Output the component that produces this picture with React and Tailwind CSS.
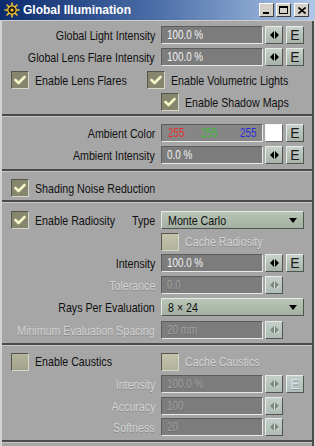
import React from "react";

const TXT = "text-[13px] leading-none text-[#111]";
const DIS = "text-[13px] leading-none text-[#d3d3d3] [text-shadow:0_1px_0_#8c8c8c]";

function N({ children, right, className = "" }) {
  return (
    <span
      className={
        "inline-block whitespace-nowrap scale-x-[0.82] " +
        (right ? "origin-right " : "origin-left ") +
        className
      }
    >
      {children}
    </span>
  );
}

function Arrows({ disabled }) {
  return (
    <svg width="9" height="8" viewBox="0 0 9 8">
      {disabled ? (
        <>
          <path d="M4 0 L0 4 L4 8Z M5 0 L9 4 L5 8Z" fill="#e6ebe6" transform="translate(0.6,0.6)" />
          <path d="M4 0 L0 4 L4 8Z M5 0 L9 4 L5 8Z" fill="#7f887f" />
        </>
      ) : (
        <path d="M4 0 L0 4 L4 8Z M5 0 L9 4 L5 8Z" fill="#000" />
      )}
    </svg>
  );
}

function Btn({ children, disabled, className = "" }) {
  return (
    <div
      className={
        "w-[18px] h-[18px] flex items-center justify-center border border-t-[#e6ede8] border-l-[#e6ede8] border-b-[#4f5750] border-r-[#4f5750] " +
        (disabled
          ? "bg-linear-to-b from-[#c4cfc9] to-[#afbdb6] "
          : "bg-linear-to-b from-[#c8d2ca] to-[#a7b3aa] ") +
        className
      }
    >
      {children}
    </div>
  );
}

function EBtn({ disabled }) {
  return (
    <Btn disabled={disabled}>
      <span
        className={
          "text-[14px] leading-none " +
          (disabled ? "text-[#d6e4ec] [text-shadow:0_1px_0_#8d9a9f]" : "text-[#1a1a1a]")
        }
      >
        E
      </span>
    </Btn>
  );
}

function Field({ children, disabled }) {
  return (
    <div
      className={
        "w-[102px] h-[18px] bg-[#7c7c7c] border border-t-[#5c5c5c] border-l-[#5c5c5c] border-b-[#e9e9e9] border-r-[#e9e9e9] flex items-center pl-[5px] text-[12px] leading-none " +
        (disabled ? "text-[#a2a2a2] [text-shadow:0_1px_0_#6a6a6a]" : "text-[#f3f3f3]")
      }
    >
      <N>{children}</N>
    </div>
  );
}

function Check({ checked, disabled }) {
  return (
    <div
      className={
        "w-[18px] h-[18px] shrink-0 border border-t-[#55564a] border-l-[#55564a] border-b-[#d7d7c8] border-r-[#d7d7c8] flex items-center justify-center " +
        (checked
          ? "bg-[#86866f]"
          : disabled
          ? "bg-linear-to-b from-[#c3c3ac] to-[#b2b29a]"
          : "bg-linear-to-b from-[#b4b49d] to-[#a3a38c]")
      }
    >
      {checked && (
        <svg width="12" height="10" viewBox="0 0 12 10">
          <path d="M1.5 5 L4.5 8 L10.5 2" fill="none" stroke="#f5f5c6" strokeWidth="2.6" strokeLinecap="round" strokeLinejoin="round" />
        </svg>
      )}
    </div>
  );
}

function Label({ children, disabled }) {
  return (
    <div className={"w-[153px] shrink-0 flex justify-end " + (disabled ? DIS : TXT)}>
      <N right className="shrink-0">{children}</N>
    </div>
  );
}

function NumRow({ label, value, e, disabled, eDisabled, className = "" }) {
  return (
    <div className={"flex items-center h-[18px] " + className}>
      <Label disabled={disabled}>{label}</Label>
      <div className="ml-[6px]">
        <Field disabled={disabled}>{value}</Field>
      </div>
      <div className="ml-[2px]">
        <Btn disabled={disabled}>
          <Arrows disabled={disabled} />
        </Btn>
      </div>
      {e && (
        <div className="ml-[3px]">
          <EBtn disabled={eDisabled} />
        </div>
      )}
    </div>
  );
}

function CheckItem({ checked, disabled, children }) {
  return (
    <div className="flex items-center">
      <Check checked={checked} disabled={disabled} />
      <span className={"ml-[6px] " + (disabled ? DIS : TXT)}>
        <N>{children}</N>
      </span>
    </div>
  );
}

function Dropdown({ children }) {
  return (
    <div className="w-[143px] h-[18px] flex items-center justify-between pl-[6px] pr-[6px] border border-t-[#e3ebe2] border-l-[#e3ebe2] border-b-[#4e574d] border-r-[#4e574d] bg-linear-to-b from-[#b9c5b7] to-[#a3afa1]">
      <span className="text-[13px] leading-none text-[#111]">
        <N>{children}</N>
      </span>
      <svg width="8" height="5" viewBox="0 0 8 5">
        <path d="M0 0 L8 0 L4 5Z" fill="#000" />
      </svg>
    </div>
  );
}

function Sep() {
  return (
    <div className="h-[3px] shrink-0 flex flex-col">
      <div className="h-[2px] bg-[#4b4b4b]" />
      <div className="h-[1px] bg-[#c6c6c6]" />
    </div>
  );
}

function TitleBtn({ children, className = "" }) {
  return (
    <div
      className={
        "w-[15px] h-[14px] bg-[#d4d0c8] border border-t-[#ffffff] border-l-[#ffffff] border-b-[#404040] border-r-[#404040] flex items-center justify-center " +
        className
      }
    >
      {children}
    </div>
  );
}

export default function App() {
  return (
    <div className="w-[315px] h-[446px] overflow-hidden flex flex-col bg-[#a6a6a6] font-['Liberation_Sans',sans-serif]">
      {/* Title bar */}
      <div className="h-[20px] shrink-0 flex items-center bg-linear-to-r from-[#0c2a6e] via-[#4d6fa8] to-[#b0c8e8]">
        <div className="ml-[4px] w-[16px] h-[16px]">
          <svg width="16" height="16" viewBox="0 0 16 16">
            <g stroke="#f2c230" strokeWidth="1.6" strokeLinecap="round">
              <line x1="8" y1="1" x2="8" y2="3.5" />
              <line x1="8" y1="12.5" x2="8" y2="15" />
              <line x1="1" y1="8" x2="3.5" y2="8" />
              <line x1="12.5" y1="8" x2="15" y2="8" />
              <line x1="3" y1="3" x2="4.8" y2="4.8" />
              <line x1="11.2" y1="11.2" x2="13" y2="13" />
              <line x1="3" y1="13" x2="4.8" y2="11.2" />
              <line x1="11.2" y1="4.8" x2="13" y2="3" />
            </g>
            <circle cx="8" cy="8" r="4.2" fill="#1a1a1a" stroke="#f2c230" strokeWidth="1.2" />
            <circle cx="8" cy="8" r="1.6" fill="#f2c230" />
          </svg>
        </div>
        <span className="ml-[3px] text-[12px] font-bold text-white leading-none">Global Illumination</span>
        <div className="ml-auto mr-[6px] flex items-center">
          <TitleBtn>
            <div className="w-[6px] h-[2px] bg-black mt-[6px] -ml-[2px]" />
          </TitleBtn>
          <TitleBtn className="ml-[2px]">
            <div className="w-[9px] h-[8px] border border-black border-t-2" />
          </TitleBtn>
          <TitleBtn className="ml-[3px]">
            <svg width="8" height="7" viewBox="0 0 8 7">
              <path d="M0.5 0.5 L7.5 6.5 M7.5 0.5 L0.5 6.5" stroke="#000" strokeWidth="1.6" />
            </svg>
          </TitleBtn>
        </div>
      </div>

      {/* Body */}
      <div className="flex-1 flex flex-col border-t border-t-[#cfcfcf] border-l-2 border-l-[#d2d2d2] border-r border-r-[#d6d6d6]">
        <div className="flex-1 flex flex-col border-r-2 border-r-[#4b4b4b]">
          {/* Section 1 */}
          <div className="flex flex-col pt-[5px] pb-[3px]">
            <NumRow label="Global Light Intensity" value="100.0 %" e />
            <NumRow label="Global Lens Flare Intensity" value="100.0 %" e className="mt-[4px]" />
            <div className="flex items-center h-[18px] mt-[5px]">
              <div className="w-[159px] pl-[9px]">
                <CheckItem checked>Enable Lens Flares</CheckItem>
              </div>
              <CheckItem checked>Enable Volumetric Lights</CheckItem>
            </div>
            <div className="flex items-center h-[18px] mt-[4px]">
              <div className="w-[159px]" />
              <CheckItem checked>Enable Shadow Maps</CheckItem>
            </div>
          </div>
          <Sep />

          {/* Section 2 */}
          <div className="flex flex-col pt-[7px] pb-[5px]">
            <div className="flex items-center h-[18px]">
              <Label>Ambient Color</Label>
              <div className="ml-[6px] w-[102px] h-[18px] bg-[#868686] border border-t-[#5c5c5c] border-l-[#5c5c5c] border-b-[#e9e9e9] border-r-[#e9e9e9] flex items-center text-[12px] leading-none">
                <N className="ml-[6px] text-[#e23434]">255</N>
                <N className="ml-[13px] text-[#3dbb3d]">255</N>
                <N className="ml-[19px] text-[#2b2bd6]">255</N>
              </div>
              <div className="ml-[2px] w-[18px] h-[18px] bg-white border border-t-[#f4f4f4] border-l-[#f4f4f4] border-b-[#6a6a6a] border-r-[#6a6a6a]" />
              <div className="ml-[3px]">
                <EBtn />
              </div>
            </div>
            <NumRow label="Ambient Intensity" value="0.0 %" e className="mt-[4px]" />
          </div>
          <Sep />

          {/* Section 3 */}
          <div className="flex flex-col pt-[7px] pb-[3px]">
            <div className="flex items-center h-[18px] pl-[9px]">
              <CheckItem checked>Shading Noise Reduction</CheckItem>
            </div>
          </div>
          <Sep />

          {/* Section 4 */}
          <div className="flex flex-col pt-[8px] pb-[4px]">
            <div className="flex items-center h-[18px]">
              <div className="w-[153px] shrink-0 pl-[9px] flex items-center justify-between">
                <div className="w-[100px] shrink-0">
                  <CheckItem checked>Enable Radiosity</CheckItem>
                </div>
                <div className={"w-[30px] shrink-0 flex justify-end " + TXT}>
                  <N right className="shrink-0">Type</N>
                </div>
              </div>
              <div className="ml-[6px]">
                <Dropdown>Monte Carlo</Dropdown>
              </div>
            </div>
            <div className="flex items-center h-[19px] mt-[3px]">
              <div className="w-[159px]" />
              <CheckItem disabled>Cache Radiosity</CheckItem>
            </div>
            <NumRow label="Intensity" value="100.0 %" e className="mt-[3px]" />
            <NumRow label="Tolerance" value="0.0" disabled className="mt-[4px]" />
            <div className="flex items-center h-[18px] mt-[4px]">
              <Label>Rays Per Evaluation</Label>
              <div className="ml-[6px]">
                <Dropdown>8 × 24</Dropdown>
              </div>
            </div>
            <NumRow label="Minimum Evaluation Spacing" value="20 mm" disabled className="mt-[5px]" />
          </div>
          <Sep />

          {/* Section 5 */}
          <div className="flex flex-col pt-[6px] pb-[4px]">
            <div className="flex items-center h-[19px]">
              <div className="w-[159px] pl-[9px]">
                <CheckItem>Enable Caustics</CheckItem>
              </div>
              <CheckItem disabled>Cache Caustics</CheckItem>
            </div>
            <NumRow label="Intensity" value="100.0 %" e disabled eDisabled className="mt-[4px]" />
            <NumRow label="Accuracy" value="100" disabled className="mt-[4px]" />
            <NumRow label="Softness" value="20" disabled className="mt-[3px]" />
          </div>
          <Sep />
        </div>
      </div>
    </div>
  );
}
